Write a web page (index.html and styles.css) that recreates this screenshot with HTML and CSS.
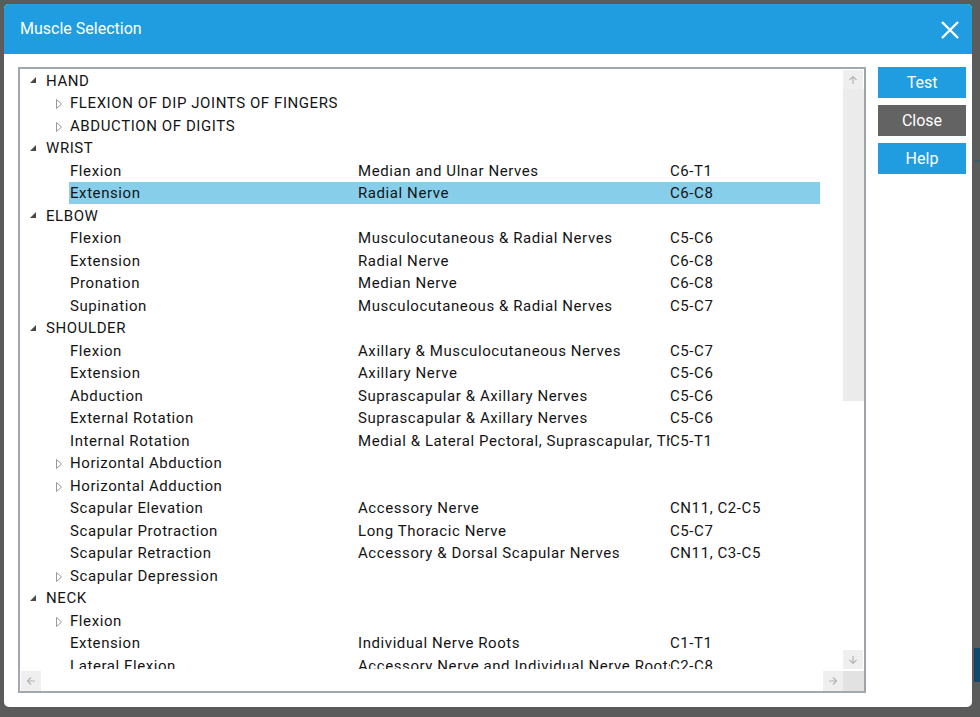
FILE: index.html
```html
<!DOCTYPE html>
<html>
<head>
<meta charset="utf-8">
<link rel="stylesheet" href="styles.css">
</head>
<body>
<div class="backdrop">
  <div class="bg-line"></div>
  <div class="bg-bar"></div>
  <div class="dialog">
    <div class="titlebar">
      <span class="title">Muscle Selection</span>
      <svg class="close-x" width="20" height="20" viewBox="0 0 20 20"><path d="M2 2 L18 18 M18 2 L2 18" stroke="#fff" stroke-width="2.4" fill="none"/></svg>
    </div>
    <div class="body">
      <div class="tree-frame">
        <div class="viewport">
          <div class="tree">
            <div class="row l0"><span class="tog"><svg width="8" height="8" viewBox="0 0 8 8"><path d="M7 1 L7 7 L1 7 Z" fill="#484848"/></svg></span><div class="cell"><span class="name">HAND</span></div></div>
            <div class="row l1"><span class="tog"><svg width="8" height="12" viewBox="0 0 8 12"><path d="M1.5 1.5 L6.5 6 L1.5 10.5 Z" fill="#fff" stroke="#9a9a9a" stroke-width="1"/></svg></span><div class="cell"><span class="name">FLEXION OF DIP JOINTS OF FINGERS</span></div></div>
            <div class="row l1"><span class="tog"><svg width="8" height="12" viewBox="0 0 8 12"><path d="M1.5 1.5 L6.5 6 L1.5 10.5 Z" fill="#fff" stroke="#9a9a9a" stroke-width="1"/></svg></span><div class="cell"><span class="name">ABDUCTION OF DIGITS</span></div></div>
            <div class="row l0"><span class="tog"><svg width="8" height="8" viewBox="0 0 8 8"><path d="M7 1 L7 7 L1 7 Z" fill="#484848"/></svg></span><div class="cell"><span class="name">WRIST</span></div></div>
            <div class="row l1"><span class="tog"></span><div class="cell"><span class="name">Flexion</span><span class="nerve">Median and Ulnar Nerves</span><span class="lvl">C6-T1</span></div></div>
            <div class="row l1"><span class="tog"></span><div class="cell sel"><span class="name">Extension</span><span class="nerve">Radial Nerve</span><span class="lvl">C6-C8</span></div></div>
            <div class="row l0"><span class="tog"><svg width="8" height="8" viewBox="0 0 8 8"><path d="M7 1 L7 7 L1 7 Z" fill="#484848"/></svg></span><div class="cell"><span class="name">ELBOW</span></div></div>
            <div class="row l1"><span class="tog"></span><div class="cell"><span class="name">Flexion</span><span class="nerve">Musculocutaneous &amp; Radial Nerves</span><span class="lvl">C5-C6</span></div></div>
            <div class="row l1"><span class="tog"></span><div class="cell"><span class="name">Extension</span><span class="nerve">Radial Nerve</span><span class="lvl">C6-C8</span></div></div>
            <div class="row l1"><span class="tog"></span><div class="cell"><span class="name">Pronation</span><span class="nerve">Median Nerve</span><span class="lvl">C6-C8</span></div></div>
            <div class="row l1"><span class="tog"></span><div class="cell"><span class="name">Supination</span><span class="nerve">Musculocutaneous &amp; Radial Nerves</span><span class="lvl">C5-C7</span></div></div>
            <div class="row l0"><span class="tog"><svg width="8" height="8" viewBox="0 0 8 8"><path d="M7 1 L7 7 L1 7 Z" fill="#484848"/></svg></span><div class="cell"><span class="name">SHOULDER</span></div></div>
            <div class="row l1"><span class="tog"></span><div class="cell"><span class="name">Flexion</span><span class="nerve">Axillary &amp; Musculocutaneous Nerves</span><span class="lvl">C5-C7</span></div></div>
            <div class="row l1"><span class="tog"></span><div class="cell"><span class="name">Extension</span><span class="nerve">Axillary Nerve</span><span class="lvl">C5-C6</span></div></div>
            <div class="row l1"><span class="tog"></span><div class="cell"><span class="name">Abduction</span><span class="nerve">Suprascapular &amp; Axillary Nerves</span><span class="lvl">C5-C6</span></div></div>
            <div class="row l1"><span class="tog"></span><div class="cell"><span class="name">External Rotation</span><span class="nerve">Suprascapular &amp; Axillary Nerves</span><span class="lvl">C5-C6</span></div></div>
            <div class="row l1"><span class="tog"></span><div class="cell"><span class="name">Internal Rotation</span><span class="nerve">Medial &amp; Lateral Pectoral, Suprascapular, Thoracodorsal Nerves</span><span class="lvl">C5-T1</span></div></div>
            <div class="row l1"><span class="tog"><svg width="8" height="12" viewBox="0 0 8 12"><path d="M1.5 1.5 L6.5 6 L1.5 10.5 Z" fill="#fff" stroke="#9a9a9a" stroke-width="1"/></svg></span><div class="cell"><span class="name">Horizontal Abduction</span></div></div>
            <div class="row l1"><span class="tog"><svg width="8" height="12" viewBox="0 0 8 12"><path d="M1.5 1.5 L6.5 6 L1.5 10.5 Z" fill="#fff" stroke="#9a9a9a" stroke-width="1"/></svg></span><div class="cell"><span class="name">Horizontal Adduction</span></div></div>
            <div class="row l1"><span class="tog"></span><div class="cell"><span class="name">Scapular Elevation</span><span class="nerve">Accessory Nerve</span><span class="lvl">CN11, C2-C5</span></div></div>
            <div class="row l1"><span class="tog"></span><div class="cell"><span class="name">Scapular Protraction</span><span class="nerve">Long Thoracic Nerve</span><span class="lvl">C5-C7</span></div></div>
            <div class="row l1"><span class="tog"></span><div class="cell"><span class="name">Scapular Retraction</span><span class="nerve">Accessory &amp; Dorsal Scapular Nerves</span><span class="lvl">CN11, C3-C5</span></div></div>
            <div class="row l1"><span class="tog"><svg width="8" height="12" viewBox="0 0 8 12"><path d="M1.5 1.5 L6.5 6 L1.5 10.5 Z" fill="#fff" stroke="#9a9a9a" stroke-width="1"/></svg></span><div class="cell"><span class="name">Scapular Depression</span></div></div>
            <div class="row l0"><span class="tog"><svg width="8" height="8" viewBox="0 0 8 8"><path d="M7 1 L7 7 L1 7 Z" fill="#484848"/></svg></span><div class="cell"><span class="name">NECK</span></div></div>
            <div class="row l1"><span class="tog"><svg width="8" height="12" viewBox="0 0 8 12"><path d="M1.5 1.5 L6.5 6 L1.5 10.5 Z" fill="#fff" stroke="#9a9a9a" stroke-width="1"/></svg></span><div class="cell"><span class="name">Flexion</span></div></div>
            <div class="row l1"><span class="tog"></span><div class="cell"><span class="name">Extension</span><span class="nerve">Individual Nerve Roots</span><span class="lvl">C1-T1</span></div></div>
            <div class="row l1"><span class="tog"></span><div class="cell"><span class="name">Lateral Flexion</span><span class="nerve">Accessory Nerve and Individual Nerve Roots</span><span class="lvl">C2-C8</span></div></div>
          </div>
        </div>
        <div class="vscroll">
          <div class="sb-btn"><svg width="10" height="10" viewBox="0 0 10 10"><path d="M5 9 V1.5 M1.5 5 L5 1.5 L8.5 5" stroke="#b4b4b4" stroke-width="1.2" fill="none"/></svg></div>
          <div class="thumb"></div>
          <div class="track"></div>
          <div class="sb-btn"><svg width="10" height="10" viewBox="0 0 10 10"><path d="M5 1 V8.5 M1.5 5 L5 8.5 L8.5 5" stroke="#b4b4b4" stroke-width="1.2" fill="none"/></svg></div>
        </div>
        <div class="hscroll">
          <div class="sb-btn h"><svg width="10" height="10" viewBox="0 0 10 10"><path d="M9 5 H1.5 M5 1.5 L1.5 5 L5 8.5" stroke="#b4b4b4" stroke-width="1.2" fill="none"/></svg></div>
          <div class="htrack"></div>
          <div class="sb-btn h"><svg width="10" height="10" viewBox="0 0 10 10"><path d="M1 5 H8.5 M5 1.5 L8.5 5 L5 8.5" stroke="#b4b4b4" stroke-width="1.2" fill="none"/></svg></div>
          <div class="corner"></div>
        </div>
      </div>
      <div class="buttons">
        <button class="btn blue">Test</button>
        <button class="btn gray">Close</button>
        <button class="btn blue">Help</button>
      </div>
    </div>
  </div>
</div>
</body>
</html>
```
FILE: styles.css
```css
* { box-sizing: border-box; }
html, body { margin: 0; padding: 0; }
body {
  width: 980px;
  height: 717px;
  overflow: hidden;
  font-family: Roboto, "Liberation Sans", sans-serif;
  background: #5b5b5b;
}
.backdrop {
  position: relative;
  width: 980px;
  height: 717px;
  padding: 4px 8px 10px 4px;
  background: #5b5b5b;
}
.bg-line {
  position: absolute;
  left: 974px;
  top: 160px;
  width: 6px;
  height: 2px;
  background: #3e5868;
}
.bg-bar {
  position: absolute;
  left: 974px;
  top: 648px;
  width: 6px;
  height: 34px;
  background: #0f4a6c;
}
.dialog {
  position: relative;
  width: 968px;
  height: 703px;
  background: #fff;
  border-radius: 5px;
  overflow: hidden;
  display: flex;
  flex-direction: column;
}
.titlebar {
  height: 50px;
  flex: none;
  background: #1f9de0;
  display: flex;
  align-items: center;
  justify-content: space-between;
  padding: 0 12px 0 16px;
}
.title {
  color: #fff;
  font-size: 16px;
  margin-top: -1px;
}
.close-x { margin-top: 2px; }
.body {
  flex: 1;
  display: flex;
  padding: 13px 6px 14px 14px;
  gap: 12px;
}
.tree-frame {
  width: 848px;
  height: 626px;
  border: 2px solid #a3a8ae;
  border-right-color: #9ea3a9;
  display: grid;
  grid-template-columns: 823px 21px;
  grid-template-rows: 600px 22px;
  background: #fff;
}
.viewport {
  overflow: hidden;
  position: relative;
}
.tree {
  width: 800px;
}
.row {
  height: 22.5px;
  display: flex;
  align-items: center;
  color: #141414;
  font-size: 15px;
  letter-spacing: 0.58px;
  white-space: nowrap;
}
.row.l0 { padding-left: 9px; }
.row.l1 { padding-left: 33px; }
.tog {
  width: 16px;
  height: 100%;
  flex: none;
  display: flex;
  align-items: center;
}
.row.l0 .tog svg { margin-top: 0px; }
.row.l1 .tog svg { margin-left: 2px; margin-top: 3px; }
.cell {
  display: flex;
  height: 100%;
  align-items: center;
  padding-left: 1px;
  padding-top: 1px;
}
.cell.sel {
  background: #87ceeb;
  width: 751px;
}
.name { width: 288px; flex: none; overflow: hidden; }
.nerve { width: 312px; flex: none; overflow: hidden; }
.lvl { width: 150px; flex: none; overflow: hidden; }
.vscroll {
  display: flex;
  flex-direction: column;
  padding-top: 1px;
}
.sb-btn {
  width: 20px;
  height: 19px;
  flex: none;
  background: #efefef;
  display: flex;
  align-items: center;
  justify-content: center;
}
.thumb {
  height: 312px;
  background: #ebebeb;
}
.track { flex: 1; background: #fff; }
.hscroll {
  grid-column: 1 / 3;
  display: flex;
  padding-left: 1px;
  padding-top: 2px;
}
.sb-btn.h { height: 20px; }
.htrack { flex: 1; background: #fff; }
.corner { width: 21px; background: #e2e2e2; }
.buttons {
  display: flex;
  flex-direction: column;
  gap: 7px;
}
.btn {
  width: 88px;
  height: 31px;
  border: none;
  color: #fff;
  font-family: Roboto, "Liberation Sans", sans-serif;
  font-size: 16px;
  padding: 0;
}
.btn.blue { background: #1f9de0; }
.btn.gray { background: #636363; }
```
